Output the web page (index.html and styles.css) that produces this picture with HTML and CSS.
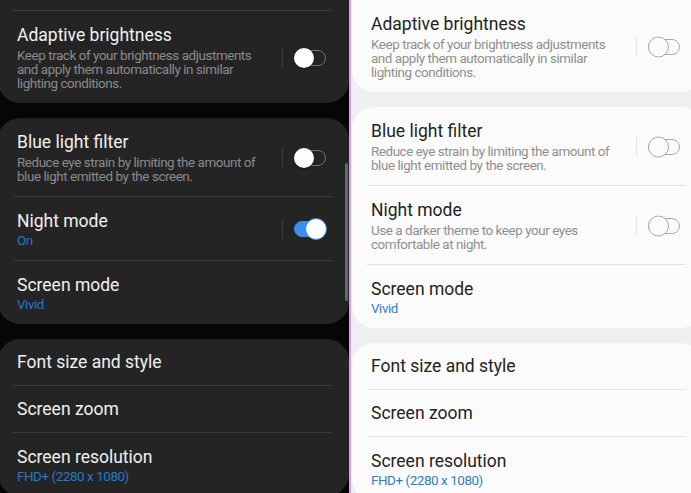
FILE: index.html
```html
<!DOCTYPE html>
<html lang="en">
<head>
    <meta charset="UTF-8">
    <meta name="viewport" content="width=device-width, initial-scale=1.0">
    <title>Display settings - dark / light</title>

    <link rel="stylesheet" href="styles.css">
</head>
<body>

    <div class="screens">

        <!-- dark theme -->
        <section class="panel panel--dark">
            <div class="card card--cut">
                <div class="row row--stub"></div>
                <div class="row">
                    <div class="row__text">
                        <div class="row__title">Adaptive brightness</div>
                        <div class="row__sub">Keep track of your brightness adjustments and apply them automatically in similar lighting conditions.</div>
                    </div>
                    <div class="row__control"><span class="switch"></span></div>
                </div>
            </div>

            <div class="card">
                <div class="row">
                    <div class="row__text">
                        <div class="row__title">Blue light filter</div>
                        <div class="row__sub">Reduce eye strain by limiting the amount of blue light emitted by the screen.</div>
                    </div>
                    <div class="row__control"><span class="switch"></span></div>
                </div>
                <div class="row">
                    <div class="row__text">
                        <div class="row__title">Night mode</div>
                        <div class="row__value">On</div>
                    </div>
                    <div class="row__control"><span class="switch switch--on"></span></div>
                </div>
                <div class="row">
                    <div class="row__text">
                        <div class="row__title">Screen mode</div>
                        <div class="row__value">Vivid</div>
                    </div>
                </div>
            </div>

            <div class="card">
                <div class="row row--single">
                    <div class="row__text"><div class="row__title">Font size and style</div></div>
                </div>
                <div class="row row--single">
                    <div class="row__text"><div class="row__title">Screen zoom</div></div>
                </div>
                <div class="row">
                    <div class="row__text">
                        <div class="row__title">Screen resolution</div>
                        <div class="row__value">FHD+ (2280 x 1080)</div>
                    </div>
                </div>
            </div>

            <div class="scrollbar"></div>
        </section>

        <div class="split"></div>

        <!-- light theme -->
        <section class="panel panel--light">
            <div class="card card--cut">
                <div class="row row--stub"></div>
                <div class="row">
                    <div class="row__text">
                        <div class="row__title">Adaptive brightness</div>
                        <div class="row__sub">Keep track of your brightness adjustments and apply them automatically in similar lighting conditions.</div>
                    </div>
                    <div class="row__control"><span class="switch"></span></div>
                </div>
            </div>

            <div class="card">
                <div class="row">
                    <div class="row__text">
                        <div class="row__title">Blue light filter</div>
                        <div class="row__sub">Reduce eye strain by limiting the amount of blue light emitted by the screen.</div>
                    </div>
                    <div class="row__control"><span class="switch"></span></div>
                </div>
                <div class="row">
                    <div class="row__text">
                        <div class="row__title">Night mode</div>
                        <div class="row__sub">Use a darker theme to keep your eyes comfortable at night.</div>
                    </div>
                    <div class="row__control"><span class="switch"></span></div>
                </div>
                <div class="row">
                    <div class="row__text">
                        <div class="row__title">Screen mode</div>
                        <div class="row__value">Vivid</div>
                    </div>
                </div>
            </div>

            <div class="card">
                <div class="row row--single">
                    <div class="row__text"><div class="row__title">Font size and style</div></div>
                </div>
                <div class="row row--single">
                    <div class="row__text"><div class="row__title">Screen zoom</div></div>
                </div>
                <div class="row">
                    <div class="row__text">
                        <div class="row__title">Screen resolution</div>
                        <div class="row__value">FHD+ (2280 x 1080)</div>
                    </div>
                </div>
            </div>
        </section>

    </div>

</body>
</html>
```

FILE: styles.css
```css
:root {
    --dark-bg: #060606;
    --dark-card: #242424;
    --dark-title: #f1f1f1;
    --dark-sub: #8b8b8b;
    --dark-line: #3b3b3b;
    --dark-blue: #2379cc;

    --light-bg: #efefef;
    --light-card: #fbfbfb;
    --light-title: #232323;
    --light-sub: #8f8f8f;
    --light-line: #e2e2e2;
    --light-blue: #2a7fca;
}
* {
    margin: 0;
    box-sizing: border-box;
}
body {
    font-family: Roboto, "Noto Sans", sans-serif;
    overflow: hidden;
}
.screens {
    display: flex;
    height: 100vh;
    overflow: hidden;
}
.panel {
    position: relative;
    overflow: hidden;
}
.panel--dark {
    width: 349px;
    flex: none;
    background: var(--dark-bg);
}
.panel--light {
    flex: 1;
    padding-left: 1px;
    background: var(--light-bg);
}
.split {
    width: 2px;
    flex: none;
    background: #d7a1ea;
}

.card {
    width: 351px;
    padding: 0 17px 0 15px;
    border-radius: 22px;
    margin-top: 15px;
}
.panel--dark .card {
    margin-left: -2px;
    background: var(--dark-card);
}
.panel--light .card {
    background: var(--light-card);
}
.card--cut {
    margin-top: 0;
    border-top-left-radius: 0;
    border-top-right-radius: 0;
}
.panel--light .card--cut {
    margin-top: -1px;
}

.row {
    display: flex;
    align-items: center;
    padding: 13px 6px 12px 4px;
}
.row + .row {
    border-top: 1px solid var(--dark-line);
}
.panel--light .row + .row {
    border-top-color: var(--light-line);
}
.row--stub {
    height: 10px;
    padding: 0;
}
.panel--light .row--stub {
    height: 0;
}
.row--single {
    padding-block: 12px;
}
.row__text {
    flex: 1;
    padding-right: 12px;
}
.row__title {
    font-size: 17.5px;
    line-height: 22px;
}
.row__sub {
    margin-top: 3px;
    font-size: 13.4px;
    line-height: 14px;
    letter-spacing: -0.42px;
}
.row__value {
    margin-top: 1px;
    font-size: 13.4px;
    line-height: 15px;
    letter-spacing: -0.42px;
}
.panel--dark .row__title { color: var(--dark-title); }
.panel--dark .row__sub { color: var(--dark-sub); }
.panel--dark .row__value { color: var(--dark-blue); }
.panel--light .row__title { color: var(--light-title); }
.panel--light .row__sub { color: var(--light-sub); }
.panel--light .row__value { color: var(--light-blue); }

.row__control {
    display: flex;
    align-items: center;
    height: 19px;
    padding-left: 11px;
    border-left: 1px solid var(--dark-line);
}
.panel--light .row__control {
    border-left-color: var(--light-line);
}

/* toggle */
.switch {
    position: relative;
    display: block;
    width: 32px;
    height: 16px;
    border-radius: 8px;
    border: 1.5px solid #737373;
}
.switch::after {
    content: "";
    position: absolute;
    top: 50%;
    left: -1.5px;
    width: 20px;
    height: 20px;
    border-radius: 50%;
    background: #fff;
    transform: translateY(-50%);
    box-shadow: 0 1px 2px rgba(0, 0, 0, .45);
}
.switch--on {
    background: #3d8ef0;
    border-color: #3d8ef0;
}
.switch--on::after {
    left: auto;
    right: -1.5px;
    border: 1.5px solid #2f84e6;
    box-shadow: none;
}
.panel--light .switch {
    border-color: #a9a9a9;
}
.panel--light .switch::after {
    width: 19px;
    height: 19px;
    background: #fbfbfb;
    border: 1.5px solid #a9a9a9;
    box-shadow: none;
}

.scrollbar {
    position: absolute;
    top: 163px;
    left: 345px;
    width: 3px;
    height: 138px;
    border-radius: 2px;
    background: #5d6a76;
}
```
